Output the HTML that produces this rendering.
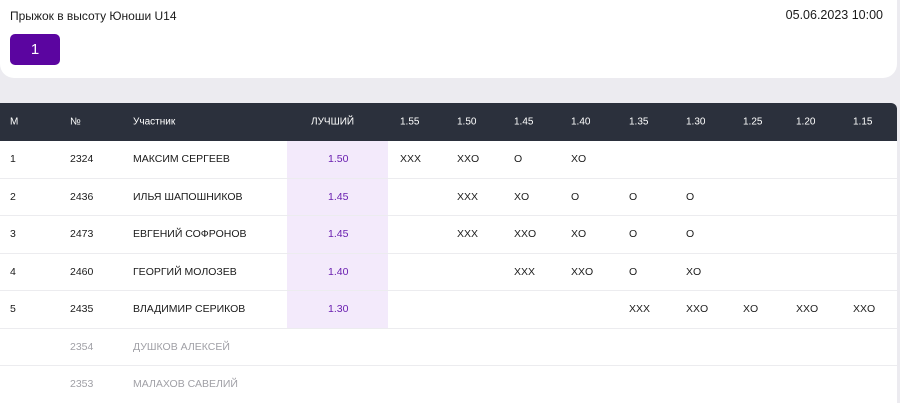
<!DOCTYPE html>
<html><head><meta charset="utf-8"><style>
*{margin:0;padding:0;box-sizing:border-box}
body{width:900px;height:403px;background:#ecebf0;font-family:"Liberation Sans",sans-serif;position:relative;overflow:hidden;color:#1a1a1a}
.card{position:absolute;left:0;top:0;width:897px;height:78px;background:#fff;border-radius:0 0 14px 14px}
.title{position:absolute;left:10px;top:9px;font-size:12px}
.date{position:absolute;right:14px;top:8px;font-size:12.5px}
.btn{position:absolute;left:10px;top:34px;width:50px;height:31px;background:#5b05a0;border-radius:5px;color:#fff;font-size:15px;text-align:center;line-height:31px}
.tbl{position:absolute;left:0;top:103px;width:897px;height:300px;background:#fff;border-radius:0 6px 0 0;overflow:hidden}
.hd{position:absolute;left:0;top:0;width:897px;height:38px;background:#2b303c;color:#fff;font-size:10px}
.best{position:absolute;left:287px;top:38px;width:101px;height:187px;background:#f3eafb}
.row{position:absolute;left:0;width:897px;height:37.5px;border-bottom:1.5px solid #ececef;font-size:10.5px}
.c{position:absolute;top:50%;transform:translateY(-50%);white-space:nowrap}
.b{color:#6a1fb0;left:328px}
.g{color:#a0a0a6}
</style></head><body>
<div class="card"><div class="title">Прыжок в высоту Юноши U14</div><div class="date">05.06.2023 10:00</div><div class="btn">1</div></div>
<div class="tbl">
<div class="best"></div>
<div class="hd">
<span class="c" style="left:10px">М</span><span class="c" style="left:70px">№</span><span class="c" style="left:133px">Участник</span><span class="c" style="left:311px">ЛУЧШИЙ</span>
<span class="c" style="left:400px">1.55</span><span class="c" style="left:457px">1.50</span><span class="c" style="left:514px">1.45</span><span class="c" style="left:571px">1.40</span><span class="c" style="left:629px">1.35</span><span class="c" style="left:686px">1.30</span><span class="c" style="left:743px">1.25</span><span class="c" style="left:796px">1.20</span><span class="c" style="left:853px">1.15</span>
</div>
<div class="row" style="top:38px"><span class="c" style="left:10px">1</span><span class="c" style="left:70px">2324</span><span class="c" style="left:133px">МАКСИМ СЕРГЕЕВ</span><span class="c b">1.50</span><span class="c" style="left:400px">XXX</span><span class="c" style="left:457px">XXO</span><span class="c" style="left:514px">O</span><span class="c" style="left:571px">XO</span></div>
<div class="row" style="top:75.5px"><span class="c" style="left:10px">2</span><span class="c" style="left:70px">2436</span><span class="c" style="left:133px">ИЛЬЯ ШАПОШНИКОВ</span><span class="c b">1.45</span><span class="c" style="left:457px">XXX</span><span class="c" style="left:514px">XO</span><span class="c" style="left:571px">O</span><span class="c" style="left:629px">O</span><span class="c" style="left:686px">O</span></div>
<div class="row" style="top:113px"><span class="c" style="left:10px">3</span><span class="c" style="left:70px">2473</span><span class="c" style="left:133px">ЕВГЕНИЙ СОФРОНОВ</span><span class="c b">1.45</span><span class="c" style="left:457px">XXX</span><span class="c" style="left:514px">XXO</span><span class="c" style="left:571px">XO</span><span class="c" style="left:629px">O</span><span class="c" style="left:686px">O</span></div>
<div class="row" style="top:150.5px"><span class="c" style="left:10px">4</span><span class="c" style="left:70px">2460</span><span class="c" style="left:133px">ГЕОРГИЙ МОЛОЗЕВ</span><span class="c b">1.40</span><span class="c" style="left:514px">XXX</span><span class="c" style="left:571px">XXO</span><span class="c" style="left:629px">O</span><span class="c" style="left:686px">XO</span></div>
<div class="row" style="top:188px"><span class="c" style="left:10px">5</span><span class="c" style="left:70px">2435</span><span class="c" style="left:133px">ВЛАДИМИР СЕРИКОВ</span><span class="c b">1.30</span><span class="c" style="left:629px">XXX</span><span class="c" style="left:686px">XXO</span><span class="c" style="left:743px">XO</span><span class="c" style="left:796px">XXO</span><span class="c" style="left:853px">XXO</span></div>
<div class="row g" style="top:225.5px"><span class="c" style="left:70px">2354</span><span class="c" style="left:133px">ДУШКОВ АЛЕКСЕЙ</span></div>
<div class="row g" style="top:263px"><span class="c" style="left:70px">2353</span><span class="c" style="left:133px">МАЛАХОВ САВЕЛИЙ</span></div>
</div>
</body></html>
